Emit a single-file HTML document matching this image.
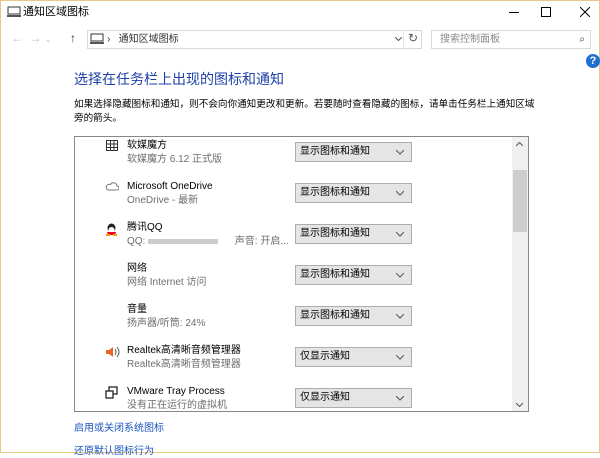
<!DOCTYPE html>
<html><head><meta charset="utf-8"><style>
*{margin:0;padding:0;box-sizing:border-box}
body{width:600px;height:453px;overflow:hidden;background:#fff;font-family:"Liberation Sans","Noto Sans CJK SC",sans-serif;position:relative;border:1px solid #e8c887;}
.a{position:absolute;white-space:nowrap;line-height:13px}
.dd{position:absolute;left:294px;width:117px;height:20px;background:#e5e5e5;border:1px solid #adadad;font-size:10px;line-height:17px;padding:0 0 0 4px;color:#000}
.dd svg{position:absolute;right:7px;top:7px}
.t{position:absolute;left:126px;font-size:10px;line-height:13px;color:#000;white-space:nowrap}
.s{position:absolute;left:126px;font-size:10px;line-height:13px;color:#6d6d6d;white-space:nowrap}
</style></head><body>
<svg class="a" style="left:6px;top:5px" width="14" height="12"><rect x="1" y="1" width="12" height="7" fill="none" stroke="#333"/><rect x="0" y="9" width="14" height="2" fill="#555"/></svg>
<div class="a" style="left:22px;top:5px;font-size:11px">通知区域图标</div>
<div class="a" style="left:508px;top:11px;width:10px;height:1px;background:#000"></div>
<div class="a" style="left:540px;top:6px;width:10px;height:10px;border:1px solid #000"></div>
<svg class="a" style="left:579px;top:6px" width="10" height="10"><path d="M0 0L10 10M10 0L0 10" stroke="#000"/></svg>
<div class="a" style="left:10px;top:31px;font-size:12px;color:#bbb">← &nbsp;→ <span style="font-size:8px">⌄</span></div>
<div class="a" style="left:69px;top:31px;font-size:12px;color:#333">↑</div>
<div class="a" style="left:86px;top:29px;width:335px;height:19px;border:1px solid #d9d9d9"></div>
<div class="a" style="left:402px;top:29px;width:1px;height:19px;background:#e5e5e5"></div>
<svg class="a" style="left:89px;top:32px" width="14" height="12"><rect x="1" y="1" width="12" height="7" fill="none" stroke="#333"/><rect x="0" y="9" width="14" height="2" fill="#555"/></svg>
<div class="a" style="left:106px;top:32px;font-size:10px;color:#333">› &nbsp; 通知区域图标</div>
<svg class="a" style="left:394px;top:36px" width="7" height="4"><path d="M0 0l3.5 3.5 3.5-3.5" fill="none" stroke="#555"/></svg>
<div class="a" style="left:407px;top:31px;font-size:12px;color:#555">↻</div>
<div class="a" style="left:430px;top:29px;width:160px;height:19px;border:1px solid #d9d9d9;font-size:10px;color:#888;padding:2px 0 0 8px">搜索控制面板<span style="position:absolute;right:5px;top:2px;color:#444">⌕</span></div>
<div class="a" style="left:585px;top:53px;width:14px;height:14px;border-radius:50%;background:#1e6fd0;color:#fff;font-size:11px;font-weight:bold;text-align:center;line-height:14px">?</div>
<div class="a" style="left:73px;top:70px;font-size:14px;line-height:16px;color:#1e3fa8">选择在任务栏上出现的图标和通知</div>
<div class="a" style="left:73px;top:97px;font-size:9.6px;color:#000;line-height:14px">如果选择隐藏图标和通知，则不会向你通知更改和更新。若要随时查看隐藏的图标，请单击任务栏上通知区域<br>旁的箭头。</div>
<div class="a" style="left:73px;top:135px;width:455px;height:276px;border:1px solid #828790;overflow:hidden">
<div class="a" style="right:0;top:0;width:16px;height:274px;background:#f0f0f0"></div>
<div class="a" style="right:1px;top:33px;width:14px;height:62px;background:#cdcdcd"></div>
<svg class="a" style="right:5px;top:5px" width="7" height="4"><path d="M0 4l3.5-3.5 3.5 3.5" fill="none" stroke="#555"/></svg>
<svg class="a" style="right:5px;top:266px" width="7" height="4"><path d="M0 0l3.5 3.5 3.5-3.5" fill="none" stroke="#555"/></svg>
</div>
<svg class="a" style="left:105px;top:139px" width="12" height="11"><g fill="none" stroke="#333"><rect x=".5" y=".5" width="11" height="10"/><path d="M4.5 0v11M8 0v11M0 4h12M0 7.5h12"/></g></svg>
<svg class="a" style="left:104px;top:180px" width="14" height="10"><path d="M3 9h9a2 2 0 0 0 0-4 3.5 3.5 0 0 0-6.5-1.5A2.8 2.8 0 0 0 3 9z" fill="none" stroke="#777"/></svg>
<svg class="a" style="left:104px;top:222px" width="13" height="13"><ellipse cx="6.5" cy="5" rx="4" ry="4.5" fill="#222"/><ellipse cx="6.5" cy="7" rx="3" ry="3" fill="#fff"/><path d="M2 9l9 0-1 3H3z" fill="#e02"/><path d="M1 12h4M8 12h4" stroke="#f90" stroke-width="2"/></svg>
<svg class="a" style="left:104px;top:345px" width="16" height="12"><path d="M1 4h3l4-3v10L4 8H1z" fill="#e86a2a"/><path d="M10 3q2 3 0 6M12 1q4 5 0 10" fill="none" stroke="#555"/></svg>
<svg class="a" style="left:104px;top:385px" width="13" height="13"><rect x="4" y="1" width="8" height="7" fill="none" stroke="#222" stroke-width="1.3"/><rect x="1" y="5" width="7" height="7" fill="#fff" stroke="#222" stroke-width="1.3"/></svg>
<div class="t" style="top:138px">软媒魔方</div><div class="s" style="top:152px">软媒魔方 6.12 正式版</div><div class="dd" style="top:141px">显示图标和通知<svg width="8" height="5"><path d="M0 0l4 4 4-4" fill="none" stroke="#555"/></svg></div>
<div class="t" style="top:179px">Microsoft OneDrive</div><div class="s" style="top:193px">OneDrive - 最新</div><div class="dd" style="top:182px">显示图标和通知<svg width="8" height="5"><path d="M0 0l4 4 4-4" fill="none" stroke="#555"/></svg></div>
<div class="t" style="top:220px">腾讯QQ</div><div class="s" style="top:234px">QQ: <span style="display:inline-block;width:70px;height:5px;background:#ccc;vertical-align:middle"></span> &nbsp; &nbsp; &nbsp;声音: 开启...</div><div class="dd" style="top:223px">显示图标和通知<svg width="8" height="5"><path d="M0 0l4 4 4-4" fill="none" stroke="#555"/></svg></div>
<div class="t" style="top:261px">网络</div><div class="s" style="top:275px">网络 Internet 访问</div><div class="dd" style="top:264px">显示图标和通知<svg width="8" height="5"><path d="M0 0l4 4 4-4" fill="none" stroke="#555"/></svg></div>
<div class="t" style="top:302px">音量</div><div class="s" style="top:316px">扬声器/听筒: 24%</div><div class="dd" style="top:305px">显示图标和通知<svg width="8" height="5"><path d="M0 0l4 4 4-4" fill="none" stroke="#555"/></svg></div>
<div class="t" style="top:343px">Realtek高清晰音频管理器</div><div class="s" style="top:357px">Realtek高清晰音频管理器</div><div class="dd" style="top:346px">仅显示通知<svg width="8" height="5"><path d="M0 0l4 4 4-4" fill="none" stroke="#555"/></svg></div>
<div class="t" style="top:384px">VMware Tray Process</div><div class="s" style="top:398px">没有正在运行的虚拟机</div><div class="dd" style="top:387px">仅显示通知<svg width="8" height="5"><path d="M0 0l4 4 4-4" fill="none" stroke="#555"/></svg></div>
<div class="a" style="left:73px;top:421px;font-size:10px;color:#1e55c0">启用或关闭系统图标</div>
<div class="a" style="left:73px;top:444px;font-size:10px;color:#1e55c0">还原默认图标行为</div>
</body></html>
